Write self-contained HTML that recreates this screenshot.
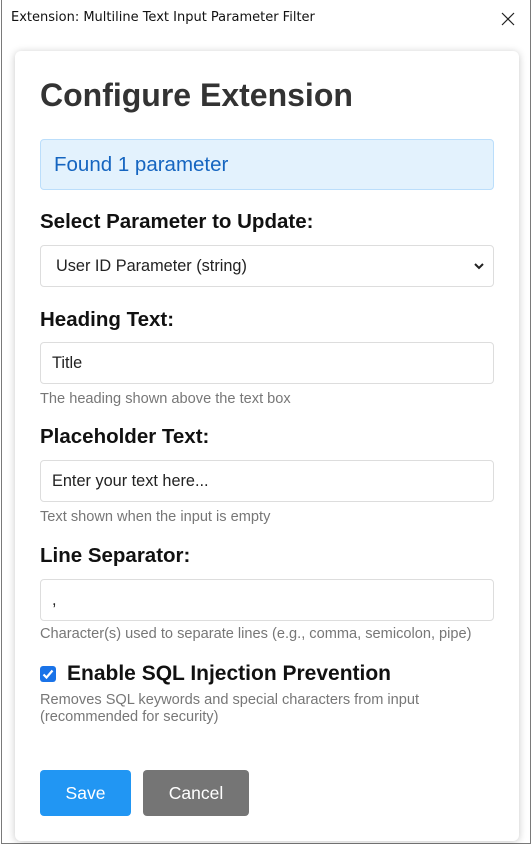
<!DOCTYPE html>
<html><head><style>
*{margin:0;padding:0;box-sizing:border-box}
body{width:532px;height:844px;overflow:hidden;background:#fff;font-family:"Liberation Sans",Arial,sans-serif;position:relative}
.win{position:absolute;left:1px;top:0;width:530px;height:844px;border:1px solid #7a7a7a;border-top:none;background:#fff}
.tb{position:absolute;left:11px;top:10px;color:#111;font-family:"DejaVu Sans","Liberation Sans",sans-serif;font-size:13px}
.x{position:absolute;left:498px;top:9px;width:20px;height:20px}
.card{position:absolute;left:15px;top:51px;width:504px;height:790px;background:#fff;border-radius:6px;box-shadow:0 1px 8px rgba(0,0,0,.22)}
.a{position:absolute;left:40px}
h1{font-size:32px;font-weight:bold;color:#333;top:77px;line-height:36px}
.alert{top:139px;width:454px;height:51px;background:#e3f2fd;border:1px solid #bbdefb;border-radius:4px;color:#1565c0;font-size:20.5px;padding:13px 0 0 13px}
.lbl{font-size:20.5px;font-weight:bold;color:#111;line-height:22px}
.in{width:454px;height:42px;border:1px solid #ddd;border-radius:4px;font-size:16.3px;color:#222;padding:11px 0 0 11px}
.help{font-size:14.6px;color:#777;line-height:17px}
.btn{top:770px;height:46px;border-radius:4px;color:#fff;font-size:17.5px;text-align:center;line-height:46px}
</style></head><body>
<div class="win"></div>
<div class="tb">Extension: Multiline Text Input Parameter Filter</div>
<svg class="x" viewBox="0 0 20 20"><path d="M4 4L16 16M16 4L4 16" stroke="#222" stroke-width="1.2"/></svg>
<div class="card"></div>
<h1 class="a">Configure Extension</h1>
<div class="a alert">Found 1 parameter</div>
<div class="a lbl" style="top:211px">Select Parameter to Update:</div>
<div class="a in" style="top:245px;padding-left:15px">User ID Parameter (string)
<svg style="position:absolute;right:8px;top:16px" width="12" height="9" viewBox="0 0 12 9"><path d="M2 2L6 6L10 2" stroke="#222" stroke-width="2" fill="none"/></svg></div>
<div class="a lbl" style="top:309px">Heading Text:</div>
<div class="a in" style="top:342px">Title</div>
<div class="a help" style="top:391px">The heading shown above the text box</div>
<div class="a lbl" style="top:426px">Placeholder Text:</div>
<div class="a in" style="top:460px">Enter your text here...</div>
<div class="a help" style="top:509px">Text shown when the input is empty</div>
<div class="a lbl" style="top:545px">Line Separator:</div>
<div class="a in" style="top:579px">,</div>
<div class="a help" style="top:626px">Character(s) used to separate lines (e.g., comma, semicolon, pipe)</div>
<div class="a" style="top:666px;width:16px;height:16px;background:#1a73e8;border-radius:3px"><svg width="16" height="16" viewBox="0 0 16 16"><path d="M3.5 8.5L6.5 11.5L12.5 4.5" stroke="#fff" stroke-width="2.2" fill="none"/></svg></div>
<div class="a lbl" style="left:67px;top:663px;font-size:21px">Enable SQL Injection Prevention</div>
<div class="a help" style="top:692px">Removes SQL keywords and special characters from input<br>(recommended for security)</div>
<div class="a btn" style="width:91px;background:#2196f3">Save</div>
<div class="a btn" style="left:143px;width:106px;background:#757575">Cancel</div>
</body></html>
